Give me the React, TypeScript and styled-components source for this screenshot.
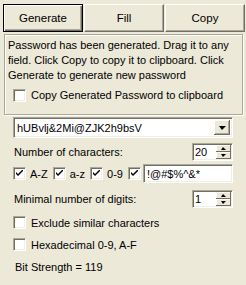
import styled, { createGlobalStyle } from "styled-components";

const GlobalStyle = createGlobalStyle`
  body {
    margin: 0;
    background: #ece9d8;
  }
`;

const Panel = styled.div`
  width: 246px;
  height: 285px;
  box-sizing: border-box;
  padding: 4px 1px 0 3px;
  font-family: "Liberation Sans", Arial, sans-serif;
  font-size: 11px;
  color: #000;
  background: #ece9d8;
`;

const ButtonRow = styled.div`
  display: flex;
  gap: 1px;
  height: 28px;
`;

const Button = styled.button<{ $default?: boolean }>`
  flex: 1;
  padding: 0;
  font-family: inherit;
  font-size: 11.5px;
  font-weight: normal;
  color: #000;
  background: #ece9d8;
  border: 1px solid;
  border-color: ${(p) => (p.$default ? "#000" : "#fff #716f64 #716f64 #fff")};
  box-shadow: ${(p) =>
    p.$default
      ? "inset 1px 1px #fff, inset -1px -1px #716f64, inset -2px -2px #aca899"
      : "inset -1px -1px #aca899"};
`;

const InfoBox = styled.div`
  margin: 2px 2px 0 1px;
  padding: 3px 3px 11px 3px;
  border: 1px solid #aca899;
  box-shadow: inset 1px 1px #fff, 1px 1px #fff;
  line-height: 15px;
`;

const CheckRow = styled.label<{ $indent?: number }>`
  display: flex;
  align-items: center;
  gap: 5px;
  margin-left: ${(p) => p.$indent ?? 0}px;
  height: 15px;
`;

const Box = styled.span`
  width: 13px;
  height: 13px;
  box-sizing: border-box;
  flex: none;
  display: flex;
  align-items: center;
  justify-content: center;
  background: #fff;
  border: 1px solid;
  border-color: #aca899 #fff #fff #aca899;
  box-shadow: inset 1px 1px #716f64, inset -1px -1px #f1efe2;
`;

const Body = styled.div`
  padding: 0 12px 0 10px;
`;

const Field = styled.div`
  display: flex;
  align-items: stretch;
  box-sizing: border-box;
  background: #fff;
  border: 1px solid;
  border-color: #aca899 #fff #fff #aca899;
  box-shadow: inset 1px 1px #716f64, inset -1px -1px #f1efe2;
  padding: 2px;
`;

const FieldText = styled.span`
  flex: 1;
  display: flex;
  align-items: center;
  padding-left: 1px;
  white-space: nowrap;
  overflow: hidden;
`;

const Combo = styled(Field)`
  margin-top: 2px;
  height: 21px;
`;

const DropButton = styled.span`
  width: 16px;
  flex: none;
  display: flex;
  align-items: center;
  justify-content: center;
  background: #ece9d8;
  box-shadow: inset -1px -1px #716f64, inset 1px 1px #fff, inset -2px -2px #aca899;
`;

const SpinButtons = styled.span`
  width: 15px;
  flex: none;
  display: flex;
  flex-direction: column;
`;

const SpinHalf = styled.span`
  flex: 1;
  display: flex;
  align-items: center;
  justify-content: center;
  background: #ece9d8;
  box-shadow: inset -1px -1px #716f64, inset 1px 1px #fff;
`;

const Row = styled.div<{ $top: number }>`
  display: flex;
  align-items: center;
  justify-content: space-between;
  margin-top: ${(p) => p.$top}px;
  padding-left: 1px;
`;

const SpinField = styled(Field)`
  height: 18px;
  width: 41px;
  padding: 1px;
`;

const CharsetRow = styled.div`
  display: flex;
  align-items: center;
  margin-top: 3px;
`;

const CharsetItem = styled.label`
  display: flex;
  align-items: center;
  gap: 4px;
  margin-right: 5px;
`;

const SymbolField = styled(Field)`
  flex: 1;
  height: 19px;
  padding: 1px 2px;
`;

const Option = styled(CheckRow)<{ $top: number }>`
  margin-top: ${(p) => p.$top}px;
  height: 13px;
`;

const Strength = styled.div`
  margin-top: 10px;
  margin-left: 2px;
`;

const Check = ({ checked }: { checked?: boolean }) => (
  <Box>
    {checked && (
      <svg width="7" height="7" viewBox="0 0 7 7">
        <path d="M0 2 L0 4 L2 6 L7 1 L7 -1 L2 4 Z" fill="#000" />
      </svg>
    )}
  </Box>
);

const Arrow = ({ up, size = 3 }: { up?: boolean; size?: number }) => (
  <svg width={size * 2 + 1} height={size + 1} viewBox={`0 0 ${size * 2 + 1} ${size + 1}`}>
    <path
      d={
        up
          ? `M${size} 0 L${size * 2 + 1} ${size + 1} L0 ${size + 1} Z`
          : `M0 0 L${size * 2 + 1} 0 L${size} ${size + 1} Z`
      }
      fill="#000"
    />
  </svg>
);

const Spin = ({ value }: { value: string }) => (
  <SpinField>
    <FieldText>{value}</FieldText>
    <SpinButtons>
      <SpinHalf>
        <Arrow up size={2} />
      </SpinHalf>
      <SpinHalf>
        <Arrow size={2} />
      </SpinHalf>
    </SpinButtons>
  </SpinField>
);

export default function App() {
  return (
    <Panel>
      <GlobalStyle />
      <ButtonRow>
        <Button $default>Generate</Button>
        <Button>Fill</Button>
        <Button>Copy</Button>
      </ButtonRow>
      <InfoBox>
        Password has been generated. Drag it to any field. Click Copy to copy it to clipboard. Click
        Generate to generate new password
        <CheckRow $indent={5} style={{ marginTop: 5 }}>
          <Check />
          Copy Generated Password to clipboard
        </CheckRow>
      </InfoBox>
      <Body>
        <Combo>
          <FieldText>hUBvlj&amp;2Mi@ZJK2h9bsV</FieldText>
          <DropButton>
            <Arrow size={3} />
          </DropButton>
        </Combo>
        <Row $top={5}>
          <span>Number of characters:</span>
          <Spin value="20" />
        </Row>
        <CharsetRow>
          <CharsetItem>
            <Check checked />
            A-Z
          </CharsetItem>
          <CharsetItem>
            <Check checked />
            a-z
          </CharsetItem>
          <CharsetItem>
            <Check checked />
            0-9
          </CharsetItem>
          <CharsetItem style={{ marginRight: 2 }}>
            <Check checked />
          </CharsetItem>
          <SymbolField>
            <FieldText>!@#$%^&amp;*</FieldText>
          </SymbolField>
        </CharsetRow>
        <Row $top={7}>
          <span>Minimal number of digits:</span>
          <Spin value="1" />
        </Row>
        <Option $top={8}>
          <Check />
          Exclude similar characters
        </Option>
        <Option $top={9}>
          <Check />
          Hexadecimal 0-9, A-F
        </Option>
        <Strength>Bit Strength = 119</Strength>
      </Body>
    </Panel>
  );
}
